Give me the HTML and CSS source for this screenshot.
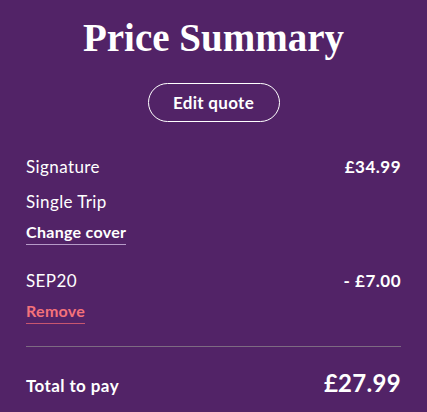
FILE: index.html
```html
<!DOCTYPE html>
<html lang="en">
<head>
<meta charset="utf-8">
<title>Price Summary</title>
<link rel="stylesheet" href="styles.css">
</head>
<body>
<main class="summary">
  <h1 class="title">Price Summary</h1>
  <div class="actions">
    <button class="edit-btn" type="button">Edit quote</button>
  </div>
  <section class="group">
    <div class="row">
      <span class="label">Signature</span>
      <span class="amount">£34.99</span>
    </div>
    <div class="row">
      <span class="label">Single Trip</span>
    </div>
    <a class="link link-light" href="#">Change cover</a>
  </section>
  <section class="group group-promo">
    <div class="row">
      <span class="label">SEP20</span>
      <span class="amount">- £7.00</span>
    </div>
    <a class="link link-coral" href="#">Remove</a>
  </section>
  <hr class="divider">
  <div class="row total">
    <span class="total-label">Total to pay</span>
    <span class="total-amount">£27.99</span>
  </div>
</main>
</body>
</html>
```
FILE: styles.css
```css
html, body {
  margin: 0;
  padding: 0;
  background: #522367;
  color: #ffffff;
  font-family: Lato, "Open Sans", sans-serif;
}

.summary {
  padding: 14px 26px 0 26px;
  display: flex;
  flex-direction: column;
}

.title {
  margin: 0;
  text-align: center;
  font-family: "Liberation Serif", serif;
  font-weight: 700;
  font-size: 39px;
  line-height: 48px;
}

.actions {
  display: flex;
  justify-content: center;
  margin-top: 21px;
}

.edit-btn {
  width: 132px;
  height: 39px;
  border: 1px solid #ffffff;
  border-radius: 20px;
  background: transparent;
  color: #ffffff;
  font-family: Lato, sans-serif;
  font-weight: 700;
  font-size: 17px;
  letter-spacing: 0.3px;
  padding: 0;
}

.group {
  display: flex;
  flex-direction: column;
  align-items: flex-start;
  margin-top: 34px;
  gap: 13px;
}

.group-promo {
  margin-top: 25px;
}

.row {
  display: flex;
  justify-content: space-between;
  align-items: baseline;
  align-self: stretch;
  line-height: 22px;
}

.label {
  font-size: 17px;
  letter-spacing: 0.4px;
}

.amount {
  font-size: 17px;
  font-weight: 700;
  letter-spacing: 0.5px;
}

.link {
  font-size: 16px;
  font-weight: 700;
  letter-spacing: 0.3px;
  line-height: 18px;
  text-decoration: none;
  padding-bottom: 3px;
  margin-top: -3px;
}

.link-light {
  color: #ffffff;
  border-bottom: 1px solid #b69bc8;
}

.link-coral {
  color: #f4727a;
  border-bottom: 1px solid #c8566f;
}

.divider {
  border: 0;
  border-top: 1px solid #7d6a82;
  margin: 22px 0 0 0;
}

.total {
  margin-top: 21px;
  line-height: 30px;
}

.total-label {
  font-size: 17px;
  font-weight: 700;
  letter-spacing: 0.4px;
}

.total-amount {
  font-size: 24px;
  font-weight: 700;
  letter-spacing: 0.3px;
}
```
